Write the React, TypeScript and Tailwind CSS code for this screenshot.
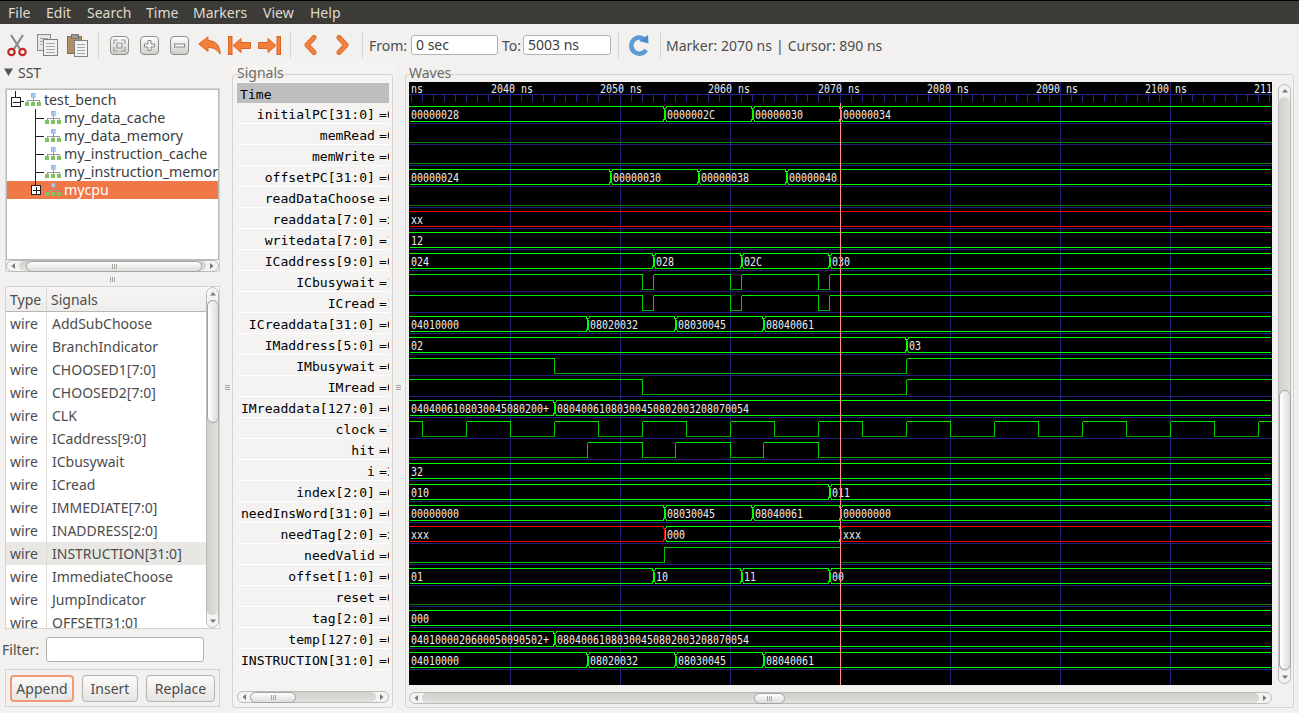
import React from "react";

const MENU: [string, number][] = [["File", 38], ["Edit", 41], ["Search", 59], ["Time", 47], ["Markers", 70], ["View", 47], ["Help", 40]];

const WAVE_TOP = (k: number) => 85 + 21 * k + 0.5;
const WAVE_BOT = (k: number) => 100 + 21 * k + 0.5;

type Seg = [number, string, boolean?];

function WaveText({ x, y, children }: { x: number; y: number; children: string }) {
  return (
    <text x={x} y={y} fontSize={12} textLength={children.length * 6} lengthAdjust="spacingAndGlyphs" fill="#ececec" fontFamily="'DejaVu Sans Mono', monospace">
      {children}
    </text>
  );
}

function Bus({ k, segs }: { k: number; segs: Seg[] }) {
  const t = WAVE_TOP(k);
  const b = WAVE_BOT(k);
  const END = 1271;
  return (
    <g>
      {segs.map(([s, label, red], i) => {
        const next = i + 1 < segs.length ? segs[i + 1][0] : null;
        const x0 = i === 0 ? 409 : s + 2;
        const x1 = next === null ? END : next - 1;
        const d =
          (i === 0 ? `M${x0} ${t}` : `M${s + 1.5} ${t + 3} L${x0 + 0.5} ${t}`) +
          ` L${x1} ${t}` +
          (next === null ? `` : ` L${next + 0.5} ${t + 3} L${next + 0.5} ${b - 3} L${x1} ${b}`) +
          (next === null ? ` M${END} ${b}` : ``) +
          ` L${x0 + 0.5} ${b}` +
          (i === 0 ? `` : ` L${s + 1.5} ${b - 3} L${s + 1.5} ${t + 3}`);
        return (
          <g key={i}>
            <path d={d} fill="none" stroke={red ? "#ff0000" : "#00ff00"} strokeWidth={1} />
            <WaveText x={i === 0 ? 411 : s + 3} y={b - 2.5}>
              {label}
            </WaveText>
          </g>
        );
      })}
    </g>
  );
}

function Bit({ k, edges, start }: { k: number; edges: number[]; start: 0 | 1 }) {
  const t = WAVE_TOP(k);
  const b = WAVE_BOT(k);
  const xs = [409, ...edges.map((e) => e + 0.5), 1272];
  const parts: React.ReactNode[] = [];
  let lv = start;
  for (let i = 0; i < xs.length - 1; i++) {
    const y = lv ? t : b;
    parts.push(<path key={`h${i}`} d={`M${xs[i]} ${y} L${xs[i + 1]} ${y}`} stroke={lv ? "#00e800" : "#00a800"} fill="none" />);
    if (i < xs.length - 2) parts.push(<path key={`v${i}`} d={`M${xs[i + 1]} ${t} L${xs[i + 1]} ${b}`} stroke="#00c800" fill="none" />);
    lv = (lv ? 0 : 1) as 0 | 1;
  }
  return <g>{parts}</g>;
}

const clockEdges: number[] = [];
for (let x = 422; x < 1272; x += 44) clockEdges.push(x);

const LABELS: [number, string][] = [[411, "ns"], [491, "2040 ns"], [600, "2050 ns"], [708, "2060 ns"], [818, "2070 ns"], [927, "2080 ns"], [1036, "2090 ns"], [1145, "2100 ns"], [1254, "2110 ns"]];
const MAJOR = [510, 620, 730, 840, 950, 1060, 1170];
const MINOR: number[] = [];
for (let x = 411; x < 1272; x += 11) MINOR.push(x);

function Waves() {
  return (
    <svg width={863} height={603} viewBox="409 82 863 603" className="block bg-black shrink-0" shapeRendering="crispEdges">
      {/* ruler */}
      <path d="M409 94.5 L1272 94.5" stroke="#26268c" />
      {MINOR.map((x) => (
        <path key={x} d={`M${x + 0.5} 94 L${x + 0.5} 102`} stroke="#26268c" />
      ))}
      {MAJOR.map((x) => (
        <path key={x} d={`M${x + 0.5} 82 L${x + 0.5} 685`} stroke="#20207c" />
      ))}
      {Array.from({ length: 27 }, (_, i) => i + 1).map((k) => (
        <path key={k} d={`M409 ${102.5 + 21 * k} L1272 ${102.5 + 21 * k}`} stroke="#20207c" />
      ))}
      {LABELS.map(([x, l]) => (
        <WaveText key={x} x={x} y={92.5}>
          {l}
        </WaveText>
      ))}

      {/* constant zero rows */}
      {[2, 3, 5, 24].map((k) => (
        <path key={k} d={`M409 ${WAVE_BOT(k)} L1272 ${WAVE_BOT(k)}`} stroke="#008000" />
      ))}

      <Bus k={1} segs={[[409, "00000028"], [664, "0000002C"], [752, "00000030"], [840, "00000034"]]} />
      <Bus k={4} segs={[[409, "00000024"], [610, "00000030"], [698, "00000038"], [786, "00000040"]]} />
      <Bus k={6} segs={[[409, "xx", true]]} />
      <Bus k={7} segs={[[409, "12"]]} />
      <Bus k={8} segs={[[409, "024"], [653, "028"], [741, "02C"], [829, "030"]]} />
      <Bit k={9} start={1} edges={[642, 653, 730, 741, 818, 829]} />
      <Bit k={10} start={1} edges={[642, 653, 730, 741, 818, 829]} />
      <Bus k={11} segs={[[409, "04010000"], [587, "08020032"], [675, "08030045"], [763, "08040061"]]} />
      <Bus k={12} segs={[[409, "02"], [906, "03"]]} />
      <Bit k={13} start={1} edges={[554, 906]} />
      <Bit k={14} start={1} edges={[642, 906]} />
      <Bus k={15} segs={[[409, "0404006108030045080200+"], [554, "08040061080300450802003208070054"]]} />
      <Bit k={16} start={1} edges={clockEdges} />
      <Bit k={17} start={0} edges={[587, 642, 675, 730, 763, 818]} />
      <Bus k={18} segs={[[409, "32"]]} />
      <Bus k={19} segs={[[409, "010"], [829, "011"]]} />
      <Bus k={20} segs={[[409, "00000000"], [664, "08030045"], [752, "08040061"], [840, "00000000"]]} />
      <Bus k={21} segs={[[409, "xxx", true], [664, "000"], [840, "xxx", true]]} />
      <path d={`M409 ${WAVE_BOT(22)} L664 ${WAVE_BOT(22)} L664 ${WAVE_TOP(22)} L840 ${WAVE_TOP(22)}`} fill="none" stroke="#00c800" />
      <path d={`M841 ${WAVE_BOT(22)} L1272 ${WAVE_BOT(22)}`} fill="none" stroke="#008000" />
      <Bus k={23} segs={[[409, "01"], [653, "10"], [741, "11"], [829, "00"]]} />
      <Bus k={25} segs={[[409, "000"]]} />
      <Bus k={26} segs={[[409, "0401000020600050090502+"], [554, "08040061080300450802003208070054"]]} />
      <Bus k={27} segs={[[409, "04010000"], [587, "08020032"], [675, "08030045"], [763, "08040061"]]} />

      <path d="M840.5 103 L840.5 685" stroke="#ff8f8f" />
    </svg>
  );
}

const SIGNALS: [string, string][] = [
  ["initialPC[31:0]", "00000034"], ["memRead", "0"], ["memWrite", "0"], ["offsetPC[31:0]", "00000040"], ["readDataChoose", "0"],
  ["readdata[7:0]", "xx"], ["writedata[7:0]", "12"], ["ICaddress[9:0]", "030"], ["ICbusywait", "1"], ["ICread", "1"],
  ["ICreaddata[31:0]", "08040061"], ["IMaddress[5:0]", "02"], ["IMbusywait", "0"], ["IMread", "0"], ["IMreaddata[127:0]", "08040061"],
  ["clock", "1"], ["hit", "0"], ["i", "32"], ["index[2:0]", "011"], ["needInsWord[31:0]", "00000000"],
  ["needTag[2:0]", "xxx"], ["needValid", "0"], ["offset[1:0]", "00"], ["reset", "0"], ["tag[2:0]", "000"],
  ["temp[127:0]", "08040061"], ["INSTRUCTION[31:0]", "08040061"],
];

const WIRES = ["AddSubChoose", "BranchIndicator", "CHOOSED1[7:0]", "CHOOSED2[7:0]", "CLK", "ICaddress[9:0]", "ICbusywait", "ICread", "IMMEDIATE[7:0]", "INADDRESS[2:0]", "INSTRUCTION[31:0]", "ImmediateChoose", "JumpIndicator", "OFFSET[31:0]"];

function Grip({ vertical = false }: { vertical?: boolean }) {
  return (
    <div className={vertical ? "flex flex-col gap-[1px]" : "flex gap-[1px]"}>
      <div className={vertical ? "w-[5px] h-[1px] bg-[#a8a6a2]" : "w-[1px] h-[5px] bg-[#a8a6a2]"} />
      <div className={vertical ? "w-[5px] h-[1px] bg-[#a8a6a2]" : "w-[1px] h-[5px] bg-[#a8a6a2]"} />
      <div className={vertical ? "w-[5px] h-[1px] bg-[#a8a6a2]" : "w-[1px] h-[5px] bg-[#a8a6a2]"} />
    </div>
  );
}

function HScroll({ width, thumbLeft, thumbWidth, className = "" }: { width: number; thumbLeft: number; thumbWidth: number; className?: string }) {
  return (
    <div className={`flex items-center h-[12px] shrink-0 rounded-full border border-[#bdbbb7] bg-[#f4f3f2] ${className}`} style={{ width }}>
      <svg width={12} height={10} viewBox="0 0 12 10" className="shrink-0">
        <path d="M8 2 L8 8 L4.5 5 Z" fill="#777" />
      </svg>
      <div className="flex-1 h-[10px] bg-gradient-to-b from-[#cfcecb] to-[#e2e1df] rounded-full flex items-center">
        <div className="h-[11px] rounded-full border border-[#a6a4a0] bg-gradient-to-b from-white to-[#dddcda] flex items-center justify-center shrink-0" style={{ marginLeft: thumbLeft, width: thumbWidth }}>
          <Grip />
        </div>
      </div>
      <svg width={12} height={10} viewBox="0 0 12 10" className="shrink-0">
        <path d="M4 2 L4 8 L7.5 5 Z" fill="#777" />
      </svg>
    </div>
  );
}

function VScroll({ height, thumbTop, thumbHeight, className = "" }: { height: number; thumbTop: number; thumbHeight: number; className?: string }) {
  return (
    <div className={`flex flex-col items-center w-[13px] shrink-0 rounded-full border border-[#bdbbb7] bg-[#f4f3f2] ${className}`} style={{ height }}>
      <svg width={10} height={12} viewBox="0 0 10 12" className="shrink-0">
        <path d="M2 7.5 L8 7.5 L5 4 Z" fill="#777" />
      </svg>
      <div className="flex-1 w-[11px] bg-gradient-to-r from-[#cfcecb] to-[#e2e1df] rounded-full flex flex-col items-center">
        <div className="w-[12px] rounded-full border border-[#a6a4a0] bg-gradient-to-r from-white to-[#dddcda] shrink-0" style={{ marginTop: thumbTop, height: thumbHeight }} />
      </div>
      <svg width={10} height={12} viewBox="0 0 10 12" className="shrink-0">
        <path d="M2 4.5 L8 4.5 L5 8 Z" fill="#777" />
      </svg>
    </div>
  );
}

function NetIcon({ x, y }: { x: number; y: number }) {
  return (
    <g transform={`translate(${x} ${y})`} shapeRendering="crispEdges">
      <rect x="6" y="0" width="4" height="4" fill="#a7c7ee" stroke="#7aa4d8" strokeWidth="0.5" />
      <path d="M8 4 V7 M2 7 H14 M2 7 V9 M8 7 V9 M14 7 V9" stroke="#9a9a9a" fill="none" />
      <rect x="0" y="9" width="4" height="4" fill="#7fc263" />
      <rect x="6" y="9" width="4" height="4" fill="#7fc263" />
      <rect x="12" y="9" width="4" height="4" fill="#7fc263" />
    </g>
  );
}

function Box({ x, y, plus }: { x: number; y: number; plus: boolean }) {
  return (
    <g shapeRendering="crispEdges">
      <rect x={x + 0.5} y={y + 0.5} width={9} height={9} fill="#fff" stroke="#222" />
      <path d={`M${x + 2} ${y + 5.5} H${x + 9}`} stroke="#222" />
      {plus && <path d={`M${x + 5.5} ${y + 2} V${y + 9}`} stroke="#222" />}
    </g>
  );
}

function TreeRow({ label, kind, selected }: { label: string; kind: "root" | "child" | "last"; selected?: boolean }) {
  return (
    <div className={`flex items-center h-[18px] text-[14.2px] ${selected ? "bg-[#f07746] text-white" : "text-[#3c3c3c]"}`}>
      <svg width={kind === "root" ? 37 : 57} height={18} className="shrink-0" shapeRendering="crispEdges">
        {kind === "root" && (
          <>
            <path d="M8.5 0 V6 M13 10.5 H17" stroke="#222" />
            <Box x={4} y={6} plus={false} />
            <NetIcon x={18} y={2} />
          </>
        )}
        {kind === "child" && (
          <>
            <path d="M28.5 0 V18 M28 9.5 H37" stroke="#222" />
            <NetIcon x={38} y={2} />
          </>
        )}
        {kind === "last" && (
          <>
            <path d="M28.5 0 V4" stroke="#222" />
            <Box x={24} y={4} plus />
            <NetIcon x={38} y={2} />
          </>
        )}
      </svg>
      <span className="whitespace-nowrap">{label}</span>
    </div>
  );
}

const Sep = ({ className = "" }: { className?: string }) => <div className={`w-[1px] h-[26px] bg-[#d6d4d0] shrink-0 ${className}`} />;

const Slot = ({ children }: { children: React.ReactNode }) => <div className="w-[30px] h-[26px] flex items-center justify-center shrink-0">{children}</div>;

const ORANGE = "#f0823a";
const ORANGE_D = "#d9642a";

function ZoomBtn({ kind }: { kind: "fit" | "plus" | "minus" }) {
  return (
    <svg width={19} height={19} viewBox="0 0 19 19">
      <defs>
        <linearGradient id="zb" x1="0" y1="0" x2="0" y2="1">
          <stop offset="0" stopColor="#ffffff" />
          <stop offset="1" stopColor="#cfcecb" />
        </linearGradient>
      </defs>
      <rect x="0.5" y="0.5" width="18" height="18" rx="3.5" fill="url(#zb)" stroke="#8e8c88" />
      {kind === "fit" && (
        <path d="M4 8 V4 H8 M11 4 H15 V8 M15 11 V15 H11 M8 15 H4 V11 M7 7 H12 V12 H7 Z" fill="none" stroke="#9a9895" strokeWidth="1.2" />
      )}
      {kind === "plus" && <path d="M8 4.5 H11 V8 H14.5 V11 H11 V14.5 H8 V11 H4.5 V8 H8 Z" fill="#f7f7f7" stroke="#8a8885" />}
      {kind === "minus" && <rect x="4.5" y="8" width="10" height="3" fill="#f7f7f7" stroke="#8a8885" />}
    </svg>
  );
}

function Toolbar() {
  return (
    <div className="h-[38px] flex items-center pl-[2px] pt-[4px] shrink-0 text-[14px] text-[#4c4c4c]">
      <Slot>
        <svg width={20} height={23} viewBox="0 0 20 23">
          <path d="M4 1 L13 15 M16 1 L7 15" stroke="#8d8d8d" strokeWidth="2.2" fill="none" />
          <circle cx="4.5" cy="18" r="3.2" fill="none" stroke="#c22a2a" strokeWidth="2.2" />
          <circle cx="15.5" cy="18" r="3.2" fill="none" stroke="#c22a2a" strokeWidth="2.2" />
        </svg>
      </Slot>
      <Slot>
        <svg width={21} height={22} viewBox="0 0 21 22" shapeRendering="crispEdges">
          <rect x="0.5" y="0.5" width="13" height="16" fill="#e8e8e6" stroke="#8b8b88" />
          <path d="M3 4.5 H11 M3 7.5 H11 M3 10.5 H5" stroke="#a5a5a2" />
          <rect x="6.5" y="5.5" width="14" height="16" fill="#f2f2f0" stroke="#7f7f7c" />
          <path d="M9 9.5 H18 M9 12.5 H18 M9 15.5 H18 M9 18.5 H18" stroke="#a5a5a2" />
        </svg>
      </Slot>
      <Slot>
        <svg width={21} height={23} viewBox="0 0 21 23" shapeRendering="crispEdges">
          <rect x="0.5" y="2.5" width="14" height="17" fill="#b08f67" stroke="#8b6f4c" />
          <rect x="4" y="0.5" width="7" height="4" fill="#9a9a98" stroke="#777" />
          <rect x="7.5" y="6.5" width="13" height="16" fill="#f2f2f0" stroke="#7f7f7c" />
          <path d="M10 10.5 H18 M10 13.5 H18 M10 16.5 H18 M10 19.5 H18" stroke="#a5a5a2" />
        </svg>
      </Slot>
      <Sep className="ml-[6px] mr-[5px]" />
      <Slot>
        <ZoomBtn kind="fit" />
      </Slot>
      <Slot>
        <ZoomBtn kind="plus" />
      </Slot>
      <Slot>
        <ZoomBtn kind="minus" />
      </Slot>
      <Slot>
        <svg width={23} height={19} viewBox="0 0 23 19">
          <path d="M0.8 8 L10 0.8 L10 4.5 C17 4.5 22.2 9 22.2 18 C19 13.5 15.5 11.5 10 11.5 L10 15.5 Z" fill={ORANGE} stroke={ORANGE_D} strokeWidth="1" strokeLinejoin="round" />
        </svg>
      </Slot>
      <Slot>
        <svg width={23} height={19} viewBox="0 0 23 19">
          <rect x="0.5" y="0.5" width="3.5" height="18" fill={ORANGE} stroke={ORANGE_D} />
          <path d="M5 9.5 L13 2.5 L13 6.5 L22.5 6.5 L22.5 12.5 L13 12.5 L13 16.5 Z" fill={ORANGE} stroke={ORANGE_D} strokeLinejoin="round" />
        </svg>
      </Slot>
      <Slot>
        <svg width={23} height={19} viewBox="0 0 23 19">
          <rect x="19" y="0.5" width="3.5" height="18" fill={ORANGE} stroke={ORANGE_D} />
          <path d="M18 9.5 L10 2.5 L10 6.5 L0.5 6.5 L0.5 12.5 L10 12.5 L10 16.5 Z" fill={ORANGE} stroke={ORANGE_D} strokeLinejoin="round" />
        </svg>
      </Slot>
      <Sep className="ml-[6px] mr-[4px]" />
      <Slot>
        <svg width={14} height={20} viewBox="0 0 14 20">
          <path d="M11 2.5 L4 10 L11 17.5" fill="none" stroke={ORANGE_D} strokeWidth="5" strokeLinejoin="round" strokeLinecap="round" />
          <path d="M11 2.5 L4 10 L11 17.5" fill="none" stroke={ORANGE} strokeWidth="3.4" strokeLinejoin="round" strokeLinecap="round" />
        </svg>
      </Slot>
      <div className="w-[3px] shrink-0" />
      <Slot>
        <svg width={14} height={20} viewBox="0 0 14 20">
          <path d="M3 2.5 L10 10 L3 17.5" fill="none" stroke={ORANGE_D} strokeWidth="5" strokeLinejoin="round" strokeLinecap="round" />
          <path d="M3 2.5 L10 10 L3 17.5" fill="none" stroke={ORANGE} strokeWidth="3.4" strokeLinejoin="round" strokeLinecap="round" />
        </svg>
      </Slot>
      <Sep className="ml-[4px] mr-[6px]" />
      <span className="w-[42px] shrink-0">From:</span>
      <div className="w-[87px] h-[20px] shrink-0 bg-white border border-[#b4b2ae] rounded-[3px] pl-[4px] text-[14px] leading-[18px] text-[#3c3c3c]">0 sec</div>
      <span className="w-[25px] shrink-0 text-right pr-[2px]">To:</span>
      <div className="w-[88px] h-[20px] shrink-0 bg-white border border-[#b4b2ae] rounded-[3px] pl-[4px] text-[14px] leading-[18px] text-[#3c3c3c]">5003 ns</div>
      <Sep className="ml-[7px] mr-[9px]" />
      <svg width={22} height={22} viewBox="0 0 22 22" className="shrink-0">
        <path d="M17 6 A8 8 0 1 0 18 16" fill="none" stroke="#5c9ad6" strokeWidth="4.5" />
        <path d="M11 7 L20 1 L20.5 9.5 Z" fill="#4a8bcc" />
      </svg>
      <Sep className="ml-[10px] mr-[5px]" />
      <span className="whitespace-nowrap">Marker: 2070 ns</span>
      <span className="mx-[4px]">|</span>
      <span className="whitespace-nowrap">Cursor: 890 ns</span>
    </div>
  );
}

function LeftColumn() {
  return (
    <div className="w-[225px] shrink-0 flex flex-col text-[#4c4c4c]">
      <div className="h-[26px] flex items-center pl-[4px] pb-[6px] shrink-0">
        <svg width={9} height={9} viewBox="0 0 9 9" className="shrink-0">
          <path d="M0 0.5 H9 L4.5 8 Z" fill="#555" />
        </svg>
        <span className="ml-[5px]">SST</span>
      </div>
      <div className="ml-[5px] w-[215px] h-[184px] shrink-0 border border-[#d5d3cf] flex flex-col">
        <div className="h-[171px] border border-[#bdbbb7] bg-white overflow-hidden shrink-0 pt-[1px]">
          <TreeRow label="test_bench" kind="root" />
          <TreeRow label="my_data_cache" kind="child" />
          <TreeRow label="my_data_memory" kind="child" />
          <TreeRow label="my_instruction_cache" kind="child" />
          <TreeRow label="my_instruction_memor" kind="child" />
          <TreeRow label="mycpu" kind="last" selected />
        </div>
        <HScroll width={213} thumbLeft={7} thumbWidth={176} />
      </div>
      <div className="h-[14px] flex items-center justify-center shrink-0">
        <Grip />
      </div>
      <div className="ml-[5px] w-[215px] h-[343px] shrink-0 border border-[#d5d3cf] flex bg-white overflow-hidden">
        <div className="flex-1 flex flex-col overflow-hidden">
          <div className="h-[25px] shrink-0 flex items-center border-b border-[#b8b6b2] bg-gradient-to-b from-[#f6f5f4] to-[#eeedeb]">
            <span className="w-[41px] pl-[4px] border-r border-[#dcdad6] h-full flex items-center">Type</span>
            <span className="pl-[4px]">Signals</span>
          </div>
          {WIRES.map((w) => (
            <div key={w} className={`h-[23px] shrink-0 flex items-center ${w === "INSTRUCTION[31:0]" ? "bg-[#e9e7e4]" : ""}`}>
              <span className="w-[41px] pl-[4px] border-r border-[#dcdad6] h-full flex items-center">wire</span>
              <span className="pl-[5px] whitespace-nowrap">{w}</span>
            </div>
          ))}
        </div>
        <VScroll height={341} thumbTop={0} thumbHeight={123} />
      </div>
      <div className="mt-[8px] h-[25px] flex items-center shrink-0">
        <span className="pl-[2px] w-[46px]">Filter:</span>
        <div className="w-[158px] h-[25px] bg-white border border-[#b4b2ae] rounded-[3px]" />
      </div>
      <div className="mt-[7px] ml-[5px] w-[215px] h-[38px] border border-[#d5d3cf] flex items-center pl-[4px] shrink-0">
        <div className="w-[64px] h-[27px] rounded-[4px] border-2 border-[#ee9a78] bg-gradient-to-b from-[#fbfbfa] to-[#e6e5e3] flex items-center justify-center">Append</div>
        <div className="ml-[8px] w-[56px] h-[27px] rounded-[4px] border border-[#b4b2ae] bg-gradient-to-b from-[#fbfbfa] to-[#e6e5e3] flex items-center justify-center">Insert</div>
        <div className="ml-[8px] w-[69px] h-[27px] rounded-[4px] border border-[#b4b2ae] bg-gradient-to-b from-[#fbfbfa] to-[#e6e5e3] flex items-center justify-center">Replace</div>
      </div>
    </div>
  );
}

function SignalsPanel() {
  return (
    <div className="w-[166px] shrink-0 bg-[#f4f3f2] pt-[12px] pl-[2px] pr-[3px] pb-[5px] flex">
      <div className="w-[161px] border border-[#d5d3cf] rounded-[3px] pl-[4px] flex flex-col">
        <div className="-mt-[9px] h-[14px] leading-[14px] text-[#6e6c66] shrink-0">Signals</div>
        <div className="w-[152px] mt-[3px] h-[20px] shrink-0 bg-[#bebebe] pl-[3px] pt-[3px] flex items-center font-['DejaVu_Sans_Mono',monospace] text-[13.1px] text-black">Time</div>
        {SIGNALS.map(([n, v]) => (
          <div key={n} className="w-[152px] h-[21px] shrink-0 border-b border-white pt-[3px] flex items-center font-['DejaVu_Sans_Mono',monospace] text-[13.1px] text-black">
            <span className="flex-1 text-right pr-[4px] whitespace-nowrap">{n}</span>
            <span className="w-[8px] shrink-0">=</span>
            <span className="w-[2px] shrink-0 overflow-hidden whitespace-nowrap">{v}</span>
          </div>
        ))}
        <HScroll width={152} thumbLeft={0} thumbWidth={46} className="mt-[21px]" />
      </div>
    </div>
  );
}

function WavesPanel() {
  return (
    <div className="flex-1 pt-[12px] pb-[5px] pr-[5px] flex">
      <div className="flex-1 border border-[#d5d3cf] rounded-[3px] pl-[3px] flex flex-col">
        <div className="-mt-[9px] h-[14px] leading-[14px] text-[#6e6c66] shrink-0">Waves</div>
        <div className="flex mt-[2px]">
          <div className="flex flex-col">
            <Waves />
            <HScroll width={863} thumbLeft={332} thumbWidth={31} className="mt-[7px]" />
          </div>
          <VScroll height={600} thumbTop={293} thumbHeight={280} className="ml-[6px] mt-[2px]" />
        </div>
      </div>
    </div>
  );
}

export default function App() {
  return (
    <div className="w-[1299px] h-[713px] overflow-hidden flex flex-col bg-[#f2f1f0] font-['Noto_Sans',sans-serif] text-[14px]">
      <div className="h-[24px] shrink-0 bg-[#3c3b37] border-t border-black flex items-center pl-[8px] text-[#dfdbd2]">
        {MENU.map(([m, w]) => (
          <span key={m} style={{ width: w }} className="shrink-0">
            {m}
          </span>
        ))}
      </div>
      <Toolbar />
      <div className="flex-1 flex min-h-0">
        <LeftColumn />
        <div className="w-[5px] shrink-0 flex items-center justify-center">
          <Grip vertical />
        </div>
        <SignalsPanel />
        <div className="w-[9px] shrink-0 flex items-center justify-start">
          <Grip vertical />
        </div>
        <WavesPanel />
      </div>
    </div>
  );
}
